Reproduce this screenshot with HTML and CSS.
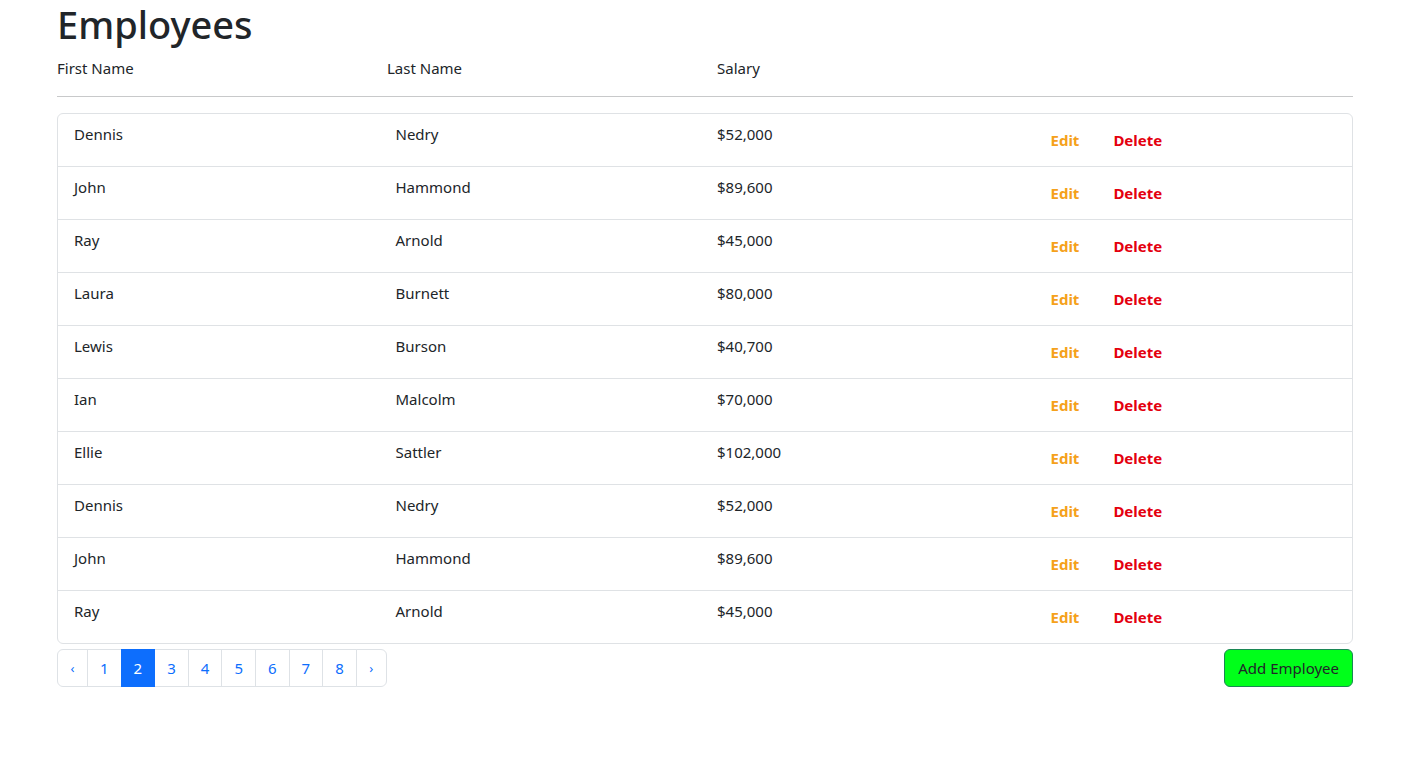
FILE: index.html
```html
<!DOCTYPE html>
<html lang="en">
<head>
<meta charset="utf-8">
<title>Employees</title>
<link rel="stylesheet" href="styles.css">
</head>
<body>
<div class="container">
  <h1 class="title">Employees</h1>
  <div class="row head-row">
    <div class="col">First Name</div>
    <div class="col">Last Name</div>
    <div class="col">Salary</div>
    <div class="col"></div>
  </div>
  <hr class="divider">
  <ul class="list-group">
    <li class="list-item"><div class="row"><div class="col">Dennis</div><div class="col">Nedry</div><div class="col">$52,000</div><div class="col actions"><button class="btn-edit">Edit</button><button class="btn-delete">Delete</button></div></div></li>
    <li class="list-item"><div class="row"><div class="col">John</div><div class="col">Hammond</div><div class="col">$89,600</div><div class="col actions"><button class="btn-edit">Edit</button><button class="btn-delete">Delete</button></div></div></li>
    <li class="list-item"><div class="row"><div class="col">Ray</div><div class="col">Arnold</div><div class="col">$45,000</div><div class="col actions"><button class="btn-edit">Edit</button><button class="btn-delete">Delete</button></div></div></li>
    <li class="list-item"><div class="row"><div class="col">Laura</div><div class="col">Burnett</div><div class="col">$80,000</div><div class="col actions"><button class="btn-edit">Edit</button><button class="btn-delete">Delete</button></div></div></li>
    <li class="list-item"><div class="row"><div class="col">Lewis</div><div class="col">Burson</div><div class="col">$40,700</div><div class="col actions"><button class="btn-edit">Edit</button><button class="btn-delete">Delete</button></div></div></li>
    <li class="list-item"><div class="row"><div class="col">Ian</div><div class="col">Malcolm</div><div class="col">$70,000</div><div class="col actions"><button class="btn-edit">Edit</button><button class="btn-delete">Delete</button></div></div></li>
    <li class="list-item"><div class="row"><div class="col">Ellie</div><div class="col">Sattler</div><div class="col">$102,000</div><div class="col actions"><button class="btn-edit">Edit</button><button class="btn-delete">Delete</button></div></div></li>
    <li class="list-item"><div class="row"><div class="col">Dennis</div><div class="col">Nedry</div><div class="col">$52,000</div><div class="col actions"><button class="btn-edit">Edit</button><button class="btn-delete">Delete</button></div></div></li>
    <li class="list-item"><div class="row"><div class="col">John</div><div class="col">Hammond</div><div class="col">$89,600</div><div class="col actions"><button class="btn-edit">Edit</button><button class="btn-delete">Delete</button></div></div></li>
    <li class="list-item"><div class="row"><div class="col">Ray</div><div class="col">Arnold</div><div class="col">$45,000</div><div class="col actions"><button class="btn-edit">Edit</button><button class="btn-delete">Delete</button></div></div></li>
  </ul>
  <div class="footer">
    <ul class="pagination">
      <li class="page-item"><a class="page-link arrow" href="#">‹</a></li>
      <li class="page-item"><a class="page-link" href="#">1</a></li>
      <li class="page-item"><a class="page-link active" href="#">2</a></li>
      <li class="page-item"><a class="page-link" href="#">3</a></li>
      <li class="page-item"><a class="page-link" href="#">4</a></li>
      <li class="page-item"><a class="page-link" href="#">5</a></li>
      <li class="page-item"><a class="page-link" href="#">6</a></li>
      <li class="page-item"><a class="page-link" href="#">7</a></li>
      <li class="page-item"><a class="page-link" href="#">8</a></li>
      <li class="page-item"><a class="page-link arrow" href="#">›</a></li>
    </ul>
    <button class="btn-add">Add Employee</button>
  </div>
</div>
</body>
</html>
```
FILE: styles.css
```css
* { box-sizing: border-box; }
html, body {
  margin: 0;
  background: #fff;
  color: #212529;
  font-family: "Noto Sans", "Open Sans", sans-serif;
  font-size: 15px;
  line-height: 24px;
}
body {
  padding-right: 10px;
}
.container {
  width: 1320px;
  margin: 0 auto;
  padding: 0 12px;
}
.title {
  margin: 0 0 8px;
  font-size: 38px;
  font-weight: 500;
  line-height: 48px;
}
.row {
  display: grid;
  grid-template-columns: repeat(4, 1fr);
  margin: 0 -12px;
}
.col {
  padding: 0 12px;
  min-width: 0;
}
.divider {
  margin: 16px 0;
  border: 0;
  border-top: 1px solid #c8c9ca;
  height: 0;
}
.list-group {
  list-style: none;
  margin: 0;
  padding: 0;
  border: 1px solid #dfe2e5;
  border-radius: 6px;
}
.list-item {
  padding: 8px 16px;
  height: 53px;
  border-bottom: 1px solid #dfe2e5;
}
.list-item:last-child {
  border-bottom: 0;
  height: 52px;
}
.actions {
  display: flex;
  gap: 10px;
}
.btn-edit, .btn-delete {
  border: 0;
  background: transparent;
  font-family: inherit;
  font-size: 15px;
  font-weight: 700;
  line-height: 24px;
  padding: 6px 12px;
  cursor: pointer;
}
.btn-edit { color: #f5a11b; }
.btn-delete { color: #e4000f; }
.footer {
  display: flex;
  justify-content: space-between;
  align-items: flex-start;
  margin-top: 5px;
}
.pagination {
  display: flex;
  list-style: none;
  margin: 0;
  padding: 0;
}
.page-link {
  display: block;
  height: 38px;
  padding: 6px 12px;
  border: 1px solid #dee2e6;
  margin-left: -1px;
  color: #0d6efd;
  text-decoration: none;
  font-size: 15px;
  line-height: 24px;
  background: #fff;
}
.page-link.arrow {
  width: 31px;
  padding: 6px 0;
  text-align: center;
  font-size: 13px;
}
.page-item:first-child .page-link {
  margin-left: 0;
  border-radius: 6px 0 0 6px;
}
.page-item:last-child .page-link {
  border-radius: 0 6px 6px 0;
}
.page-link.active {
  background: #0d6efd;
  border-color: #0d6efd;
  color: #fff;
  position: relative;
}
.btn-add {
  height: 38px;
  padding: 6px 13px;
  background: #00ff1a;
  border: 1px solid #198754;
  border-radius: 6px;
  color: #212529;
  font-family: inherit;
  font-size: 15px;
  line-height: 24px;
  cursor: pointer;
}
```
